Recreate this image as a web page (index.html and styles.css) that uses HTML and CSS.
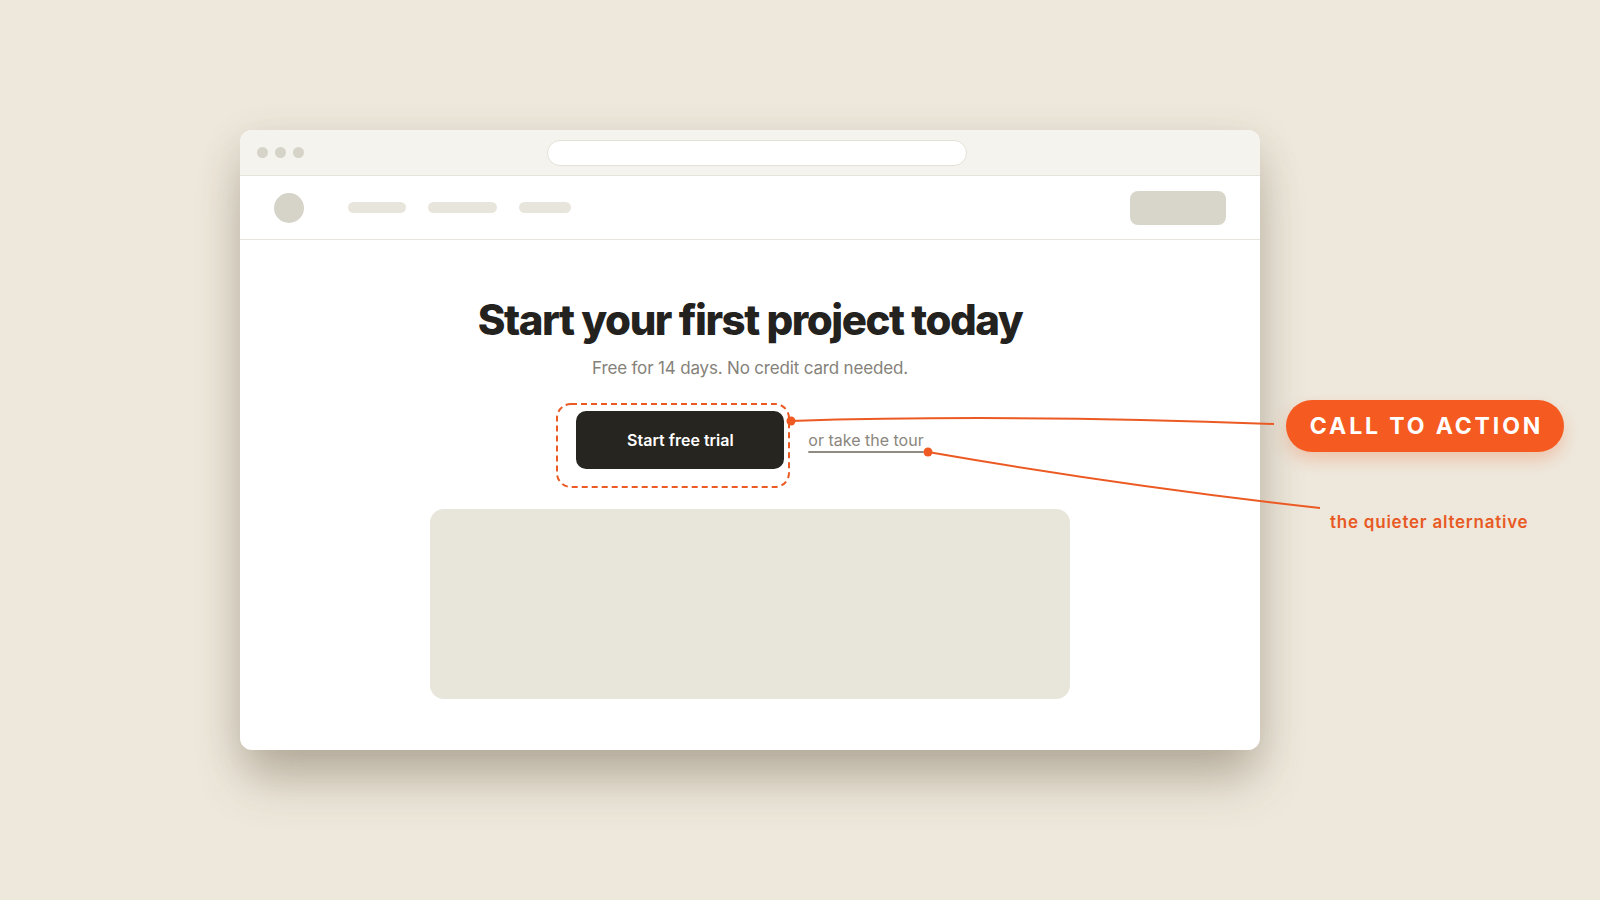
FILE: index.html
```html
<!DOCTYPE html>
<html lang="en">
<head>
<meta charset="UTF-8" />
<meta name="viewport" content="width=device-width, initial-scale=1.0"/>
<title>Call to action</title>
<link rel="stylesheet" href="styles.css">
</head>
<body>
<div class="stage">
<div class="browser">
<!-- Window chrome -->
<div class="titlebar">
<div class="traffic">
<span></span><span></span><span></span>
</div>
<div class="urlbar"></div>
</div>

<!-- Site nav -->
<div class="site-nav">
<div class="logo"></div>
<div class="nav-links">
<span class="pill w58"></span>
<span class="pill w70"></span>
<span class="pill w52"></span>
</div>
<div class="nav-btn"></div>
</div>

<!-- Hero -->
<div class="hero">
<h1>Start your first project today</h1>
<p class="sub">Free for 14 days. No credit card needed.</p>
<div class="actions">
<a href="#" class="btn-primary">Start free trial</a>
<a href="#" class="tour-link">or take the tour</a>
</div>
<div class="media"></div>
</div>
</div>
</div>

<!-- Annotations -->
<svg class="notes" width="1600" height="900" viewBox="0 0 1600 900">
<rect x="557" y="404" width="232" height="83" rx="14" ry="14" fill="none" stroke="#ec5a24" stroke-width="2" stroke-dasharray="6 4"/>
<path d="M791 421 Q1010 414 1274 424" fill="none" stroke="#ec5a24" stroke-width="2"/>
<path d="M928 452 Q1124 486 1320 508" fill="none" stroke="#ec5a24" stroke-width="2"/>
<circle cx="791" cy="421" r="4.5" fill="#ef5a22"/>
<circle cx="928" cy="452" r="4.5" fill="#ef5a22"/>
</svg>
<div class="tag-cta">CALL TO ACTION</div>
<div class="tag-quiet">the quieter alternative</div>
</body>
</html>
```

FILE: styles.css
```css
* {
box-sizing: border-box;
margin: 0;
padding: 0;
}

body {
font-family: Inter, 'Noto Sans', sans-serif;
background: #eee8dc;
width: 1600px;
height: 900px;
overflow: hidden;
position: relative;
}

.stage {
padding: 130px 0 0 240px;
}

.browser {
width: 1020px;
height: 620px;
background: #fff;
border-radius: 12px;
overflow: hidden;
box-shadow: 0 34px 50px -6px rgba(80, 66, 40, 0.30), 0 10px 40px rgba(80, 66, 40, 0.14);
}

.titlebar {
height: 46px;
background: #f5f3ee;
border-bottom: 1px solid #e6e3da;
display: flex;
align-items: center;
padding-left: 17px;
}

.traffic {
display: flex;
gap: 7px;
}

.traffic span {
width: 11px;
height: 11px;
border-radius: 50%;
background: #d6d3c8;
}

.urlbar {
margin-left: 243px;
width: 420px;
height: 26px;
background: #fff;
border: 1px solid #e4e1d7;
border-radius: 13px;
}

.site-nav {
height: 64px;
border-bottom: 1px solid #e8e5dd;
display: flex;
align-items: center;
padding: 0 34px;
}

.logo {
width: 30px;
height: 30px;
border-radius: 50%;
background: #d6d4c9;
}

.nav-links {
display: flex;
gap: 22px;
margin-left: 44px;
}

.pill {
height: 11px;
border-radius: 6px;
background: #e8e5dc;
}

.w58 { width: 58px; }
.w70 { width: 69px; }
.w52 { width: 52px; }

.nav-btn {
margin-left: auto;
width: 96px;
height: 34px;
border-radius: 8px;
background: #d8d6ca;
}

.hero {
display: flex;
flex-direction: column;
align-items: center;
padding-top: 57px;
}

h1 {
font-size: 42px;
line-height: 46px;
font-weight: 800;
letter-spacing: -0.035em;
color: #23221e;
}

.sub {
margin-top: 13px;
font-size: 17px;
line-height: 24px;
letter-spacing: -0.01em;
color: #85827a;
}

.actions {
margin-top: 31px;
display: flex;
align-items: center;
gap: 24px;
}

.btn-primary {
width: 208px;
height: 58px;
border-radius: 10px;
background: #262520;
color: #fff;
font-size: 16px;
font-weight: 600;
text-decoration: none;
display: flex;
justify-content: center;
align-items: center;
}

.tour-link {
font-size: 16px;
color: #8a867d;
text-decoration: underline;
text-decoration-thickness: 2px;
text-underline-offset: 5px;
text-decoration-color: #8f8b82;
}

.media {
margin-top: 40px;
width: 640px;
height: 190px;
border-radius: 14px;
background: #e8e5db;
}

/* annotation layer */
.notes {
position: absolute;
top: 0;
left: 0;
pointer-events: none;
}

.tag-cta {
position: absolute;
left: 1286px;
top: 400px;
width: 278px;
height: 52px;
border-radius: 26px;
background: #f55b20;
color: #fff;
font-size: 23px;
font-weight: 700;
letter-spacing: 0.125em;
display: flex;
justify-content: center;
align-items: center;
padding-left: 3px;
box-shadow: 0 8px 16px rgba(235, 90, 30, 0.25);
}

.tag-quiet {
position: absolute;
left: 1330px;
top: 510px;
font-size: 17px;
line-height: 24px;
font-weight: 600;
letter-spacing: 0.045em;
color: #e85a24;
}
```
